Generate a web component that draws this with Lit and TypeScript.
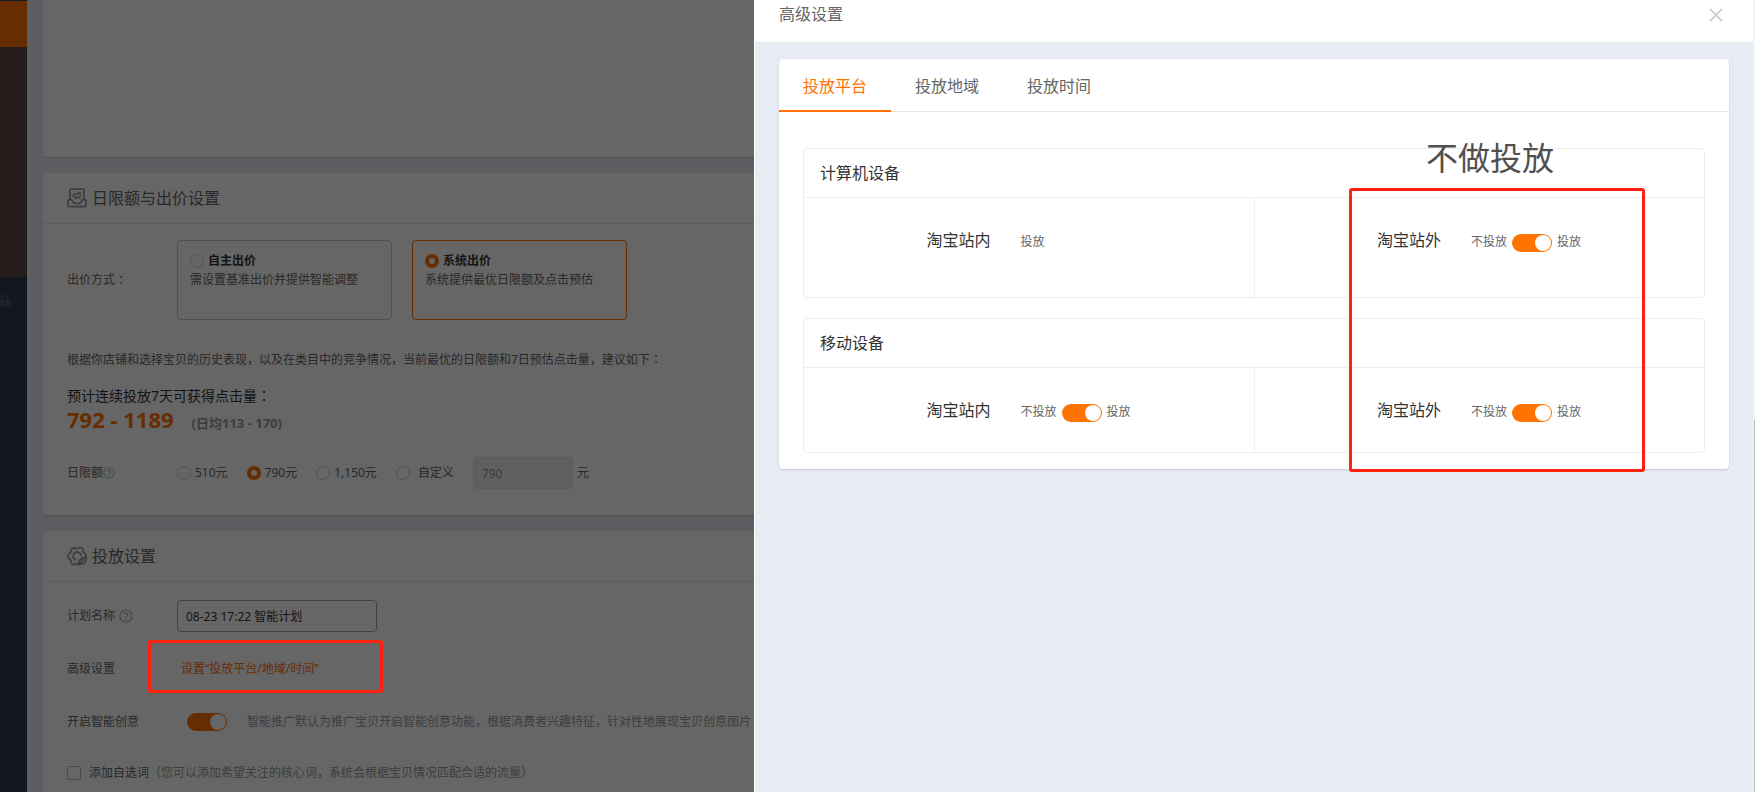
import { LitElement, html, css } from "lit";
import { customElement, property, state } from "lit/decorators.js";
import { classMap } from "lit/directives/class-map.js";

const helpIcon = (size: number) => html`<svg width=${size} height=${size} viewBox="0 0 14 14" fill="none" stroke="#b4b4b4" aria-hidden="true">
  <circle cx="7" cy="7" r="6" stroke-width="1.2"></circle>
  <path d="M5.2 5.6a1.8 1.8 0 1 1 2.7 1.5Q7 7.6 7 8.4M7 9.6v1.2" stroke-width="1.3"></path>
</svg>`;

const bidIcon = html`<svg width="20" height="20" viewBox="0 0 20 20" fill="none" stroke="#999" stroke-width="1.7" stroke-linejoin="round" aria-hidden="true">
  <path d="M3 11V2.4Q3 1.2 4.2 1.2H15.8Q17 1.2 17 2.4V11"></path>
  <path d="M5 11.6H2.2Q1 11.6 1 12.8V17.4Q1 18.6 2.2 18.6H17.8Q19 18.6 19 17.4V12.8Q19 11.6 17.8 11.6H15"></path>
  <path d="M5 11.6Q5.6 15.6 10 15.6T15 11.6"></path>
  <path d="M6.4 6.4L10 5.8L13 4v6L10 8.8L8.8 11L7.6 8.6L6.4 8.8Z" stroke-width="1.5"></path>
</svg>`;

const gearIcon = html`<svg width="20" height="20" viewBox="0 0 20 20" fill="none" stroke="#999" stroke-width="1.7" stroke-linecap="round" stroke-linejoin="round" aria-hidden="true">
  <path d="M11.4 18.6Q10.6 17.4 9 17.8Q6.6 19.6 4.6 17.6Q3.6 16.8 4 14.8Q3.6 13.4 2 12.8Q.4 11.4 1.2 9.2Q1.6 7.8 3.2 7.2Q4 6.4 3.8 4.6Q4.2 2.4 6.6 2Q8 1.8 9 2.8Q10.4 3.2 11.6 2Q13.6 .8 15.4 2.4Q16.4 3.4 16 5.2Q16.2 6.6 17.6 7.2Q19.6 8.6 18.8 10.6"></path>
  <path d="M8.6 13.8A4 4 0 1 1 14 9.4"></path>
  <path d="M12 18.8Q10.6 12.6 19 11.2Q19.4 18 14.2 18M12.2 18.6L16.4 13.8"></path>
</svg>`;

@customElement("switch-toggle")
class SwitchToggle extends LitElement {
  @property() label = "";
  @state() private on = true;

  static styles = css`
    :host { display: inline-flex; }
    .switch {
      appearance: none;
      position: relative;
      box-sizing: border-box;
      width: 40px;
      height: 18px;
      margin: 0;
      border-radius: 9px;
      background: #ccc;
      cursor: pointer;
    }
    .switch::before {
      content: "";
      position: absolute;
      top: 1px;
      left: 1px;
      width: 16px;
      height: 16px;
      border-radius: 50%;
      background: #fff;
    }
    .switch:checked { background: #ff7300; }
    .switch:checked::before { left: 23px; }
  `;

  render() {
    return html`<input class="switch" type="checkbox" role="switch" aria-label=${this.label}
      .checked=${this.on} @change=${() => (this.on = !this.on)} />`;
  }
}

@customElement("device-panel")
class DevicePanel extends LitElement {
  @property() heading = "";
  @property({ type: Boolean }) fixed = false;

  static styles = css`
    :host { display: block; }
    .panel {
      border: 1px solid #eee;
      border-radius: 4px;
      color: #333;
      font-size: 16px;
      line-height: 24px;
    }
    .title {
      margin: 0;
      padding: 12px 16px;
      border-bottom: 1px solid #eee;
      font-size: 16px;
      font-weight: 400;
    }
    .cells { display: grid; grid-template-columns: 1fr 1fr; }
    .cell {
      display: grid;
      grid-template-columns: 5fr 7fr;
      padding: 30px 0;
    }
    .tall { padding-bottom: 45px; }
    .cell + .cell { border-left: 1px solid #eee; }
    .site { padding-right: 1px; text-align: right; }
    .value {
      display: flex;
      align-items: center;
      gap: 5px;
      padding: 4px 0 0 29px;
      color: #666;
      font-size: 12px;
      line-height: 20px;
    }
    .toggle { padding-top: 2px; }
  `;

  private choice(site: string) {
    return html`<span>不投放</span><switch-toggle class="toggle" label=${this.heading + site}></switch-toggle><span>投放</span>`;
  }

  render() {
    const cell = { cell: true, tall: this.fixed };
    return html`<section class="panel">
      <h3 class="title">${this.heading}</h3>
      <div class="cells">
        <div class=${classMap(cell)}>
          <span class="site">淘宝站内</span>
          <span class="value">${this.fixed ? html`<span>投放</span>` : this.choice("淘宝站内")}</span>
        </div>
        <div class=${classMap(cell)}>
          <span class="site">淘宝站外</span>
          <span class="value">${this.choice("淘宝站外")}</span>
        </div>
      </div>
    </section>`;
  }
}

@customElement("app-root")
class AppRoot extends LitElement {
  @state() private tab = 0;

  static styles = css`
    :host {
      display: block;
      position: relative;
      height: 100vh;
      overflow: hidden;
      background: #e7ebf2;
      color: #666;
      font-family: "Noto Sans", "Noto Sans CJK SC", sans-serif;
      font-size: 12px;
      line-height: 20px;
    }
    .page { display: flex; height: 100%; }
    .sidebar {
      flex: none;
      display: flex;
      flex-direction: column;
      width: 27px;
      background: #303a55;
    }
    .current { height: 46px; margin-top: 1px; background: #ff7000; }
    .submenu { height: 230px; background: #5f4848; }
    .lock { margin-top: 17px; }
    .main {
      flex: 1;
      display: flex;
      flex-direction: column;
      gap: 16px;
      min-width: 0;
      padding-left: 16px;
      white-space: nowrap;
    }
    .card {
      flex: none;
      border-radius: 4px;
      background: #fff;
      box-shadow: 0 1px 2px rgba(0, 0, 0, 0.15);
    }
    .blank { height: 157px; border-radius: 0 0 4px 4px; }
    .last { flex: 1; }
    .card-head {
      display: flex;
      align-items: center;
      gap: 5px;
      height: 50px;
      padding: 0 24px;
      border-bottom: 1px solid #e5e5e5;
    }
    .card-title { margin: 0; font-size: 16px; font-weight: 400; line-height: 24px; }
    .bid { padding: 16px 24px 26px; }
    .plan { padding: 18px 24px; }
    .row { display: flex; align-items: center; }
    .name { flex: none; display: flex; align-items: center; width: 110px; }
    .spaced { gap: 4px; }
    .colon { font-family: "Noto Sans CJK TC", sans-serif; }
    .options { display: flex; gap: 20px; }
    .option {
      box-sizing: border-box;
      width: 215px;
      height: 80px;
      padding: 10px 12px;
      border: 1px solid #c8c8c8;
      border-radius: 4px;
    }
    .chosen { border-color: #ff7000; }
    .option-name { display: flex; align-items: center; gap: 4px; color: #333; font-weight: 700; }
    .option-note { display: block; line-height: 18px; }
    .radio, .check {
      appearance: none;
      flex: none;
      box-sizing: border-box;
      width: 14px;
      height: 14px;
      margin: 0;
      border: 1px solid #ccc;
      background: #fff;
    }
    .radio { border-radius: 50%; }
    .radio:checked { border: 4px solid #ff7000; }
    .check { border-radius: 2px; border-color: #bbb; }
    .advice { height: 20px; margin: 29px 0 16px; }
    .forecast { height: 20px; margin: 0; color: #333; font-size: 14px; }
    .clicks { display: flex; align-items: baseline; gap: 18px; height: 28px; margin-bottom: 24px; line-height: 28px; font-weight: 700; }
    .total { color: #ff7000; font-size: 22px; }
    .daily { color: #999; font-size: 13px; }
    .budget { display: flex; align-items: center; gap: 19px; }
    .amount { display: flex; align-items: center; gap: 4px; }
    .custom { gap: 8px; }
    .field {
      box-sizing: border-box;
      height: 32px;
      padding: 0 8px;
      border: 1px solid #a0a0b0;
      border-radius: 4px;
      background: #fff;
      color: #333;
      font: inherit;
    }
    .short { width: 100px; border-color: #e5e5e5; background: #eee; color: #999; }
    .long { width: 200px; }
    .advanced { margin-top: 27px; }
    .link { padding-left: 4px; color: #ff7000; text-decoration: none; }
    .creative { gap: 20px; margin-top: 33px; }
    .creative .name { width: 100px; }
    .hint { color: #999; }
    .words { gap: 8px; margin-top: 31px; }
    .mask { position: absolute; inset: 0; background: rgba(0, 0, 0, 0.6); }
    .mark {
      position: absolute;
      box-sizing: border-box;
      border: 3px solid #ff2010;
      border-radius: 3px;
      pointer-events: none;
    }
    .mark-link { left: 148px; top: 640px; width: 235px; height: 53px; }
    .mark-sites { right: 110px; top: 188px; width: 296px; height: 284px; }
    .note {
      position: absolute;
      right: 201px;
      top: 138px;
      margin: 0;
      color: #505050;
      font-size: 32px;
      line-height: 40px;
    }
    .drawer {
      position: absolute;
      inset: 0 0 0 754px;
      display: flex;
      box-sizing: border-box;
      border-left: 1px solid #fff;
      background: #e7ebf3;
    }
    .drawer-main { flex: 1; min-width: 0; }
    .drawer-head {
      display: flex;
      align-items: center;
      justify-content: space-between;
      padding: 0 30px 14px 24px;
      border-bottom: 1px solid #e4e7ea;
      background: #fff;
    }
    .drawer-title { margin: 0; font-size: 16px; font-weight: 400; line-height: 28px; }
    .close { display: flex; padding: 2px 0 0; border: 0; background: none; cursor: pointer; }
    .drawer-card { margin: 16px 24px; padding-bottom: 16px; }
    .tabs { display: flex; height: 53px; box-sizing: border-box; border-bottom: 1px solid #e5e5e5; }
    .tab {
      height: 53px;
      padding: 2px 24px 0;
      border: 0;
      border-bottom: 2px solid transparent;
      background: none;
      color: #666;
      font: inherit;
      font-size: 16px;
      cursor: pointer;
    }
    .active { border-bottom-color: #ff7000; color: #ff7000; }
    .panels { display: grid; gap: 20px; padding: 36px 24px 0; }
    .track { flex: none; display: flex; align-items: flex-end; justify-content: flex-end; width: 2px; background: #f3f4f8; }
    .thumb { width: 1px; height: 47%; background: #b4b6bc; }
  `;

  private amount(value: string, checked = false) {
    return html`<label class="amount"><input class="radio" type="radio" name="budget" .checked=${checked} />${value}</label>`;
  }

  render() {
    return html`
      <div class="page">
        <nav class="sidebar" aria-label="导航">
          <div class="current"></div>
          <div class="submenu"></div>
          <svg class="lock" width="11" height="14" viewBox="0 0 11 14" aria-hidden="true">
            <path d="M1.6 6V4.4a3 3 0 0 1 6 0V6" fill="none" stroke="#4c5670" stroke-width="1.5"></path>
            <path d="M0 6h10v6.5H0Z" fill="#4c5670"></path>
            <circle cx="4.5" cy="9" r="1" fill="#303a55"></circle>
          </svg>
        </nav>
        <main class="main">
          <section class="card blank"></section>
          <section class="card">
            <header class="card-head">${bidIcon}<h2 class="card-title">日限额与出价设置</h2></header>
            <div class="bid">
              <div class="row">
                <span class="name">出价方式<span class="colon">：</span></span>
                <div class="options">
                  <label class="option">
                    <span class="option-name"><input class="radio" type="radio" name="bid" />自主出价</span>
                    <span class="option-note">需设置基准出价并提供智能调整</span>
                  </label>
                  <label class="option chosen">
                    <span class="option-name"><input class="radio" type="radio" name="bid" checked />系统出价</span>
                    <span class="option-note">系统提供最优日限额及点击预估</span>
                  </label>
                </div>
              </div>
              <p class="advice">根据你店铺和选择宝贝的历史表现，以及在类目中的竞争情况，当前最优的日限额和7日预估点击量，建议如下<span class="colon">：</span></p>
              <p class="forecast">预计连续投放7天可获得点击量<span class="colon">：</span></p>
              <div class="clicks"><span class="total">792 - 1189</span><span class="daily">(日均113 - 170)</span></div>
              <div class="row">
                <span class="name">日限额${helpIcon(12)}</span>
                <div class="budget">
                  ${this.amount("510元")}${this.amount("790元", true)}${this.amount("1,150元")}
                  <label class="amount custom"><input class="radio" type="radio" name="budget" />自定义</label>
                  <label class="amount"><input class="field short" type="text" value="790" aria-label="自定义日限额" disabled />元</label>
                </div>
              </div>
            </div>
          </section>
          <section class="card last">
            <header class="card-head">${gearIcon}<h2 class="card-title">投放设置</h2></header>
            <div class="plan">
              <div class="row">
                <label class="name spaced" for="plan-name">计划名称${helpIcon(14)}</label>
                <input class="field long" id="plan-name" type="text" value="08-23 17:22 智能计划" />
              </div>
              <div class="row advanced">
                <span class="name">高级设置</span>
                <a class="link" href="#advanced">设置“投放平台/地域/时间”</a>
              </div>
              <div class="row creative">
                <span class="name">开启智能创意</span>
                <switch-toggle label="开启智能创意"></switch-toggle>
                <span class="hint">智能推广默认为推广宝贝开启智能创意功能，根据消费者兴趣特征，针对性地展现宝贝创意图片</span>
              </div>
              <label class="row words">
                <input class="check" type="checkbox" />
                <span>添加自选词<span class="hint">（您可以添加希望关注的核心词，系统会根据宝贝情况匹配合适的流量）</span></span>
              </label>
            </div>
          </section>
        </main>
      </div>
      <div class="mask"></div>
      <div class="mark mark-link"></div>
      <aside class="drawer" role="dialog" aria-label="高级设置">
        <div class="drawer-main">
          <header class="drawer-head">
            <h2 class="drawer-title">高级设置</h2>
            <button class="close" type="button" aria-label="关闭">
              <svg width="14" height="14" viewBox="0 0 14 14" fill="none" stroke="#ccc" stroke-width="1.7"><path d="M1.2 1.2L12.8 12.8M12.8 1.2L1.2 12.8"></path></svg>
            </button>
          </header>
          <section class="card drawer-card">
            <div class="tabs" role="tablist">
              ${["投放平台", "投放地域", "投放时间"].map(
                (name, i) => html`<button type="button" role="tab" aria-selected=${this.tab === i}
                  class=${classMap({ tab: true, active: this.tab === i })} @click=${() => (this.tab = i)}>${name}</button>`
              )}
            </div>
            <div class="panels">
              <device-panel heading="计算机设备" fixed></device-panel>
              <device-panel heading="移动设备"></device-panel>
            </div>
          </section>
        </div>
        <div class="track"><div class="thumb"></div></div>
        <p class="note">不做投放</p>
        <div class="mark mark-sites"></div>
      </aside>
    `;
  }
}
